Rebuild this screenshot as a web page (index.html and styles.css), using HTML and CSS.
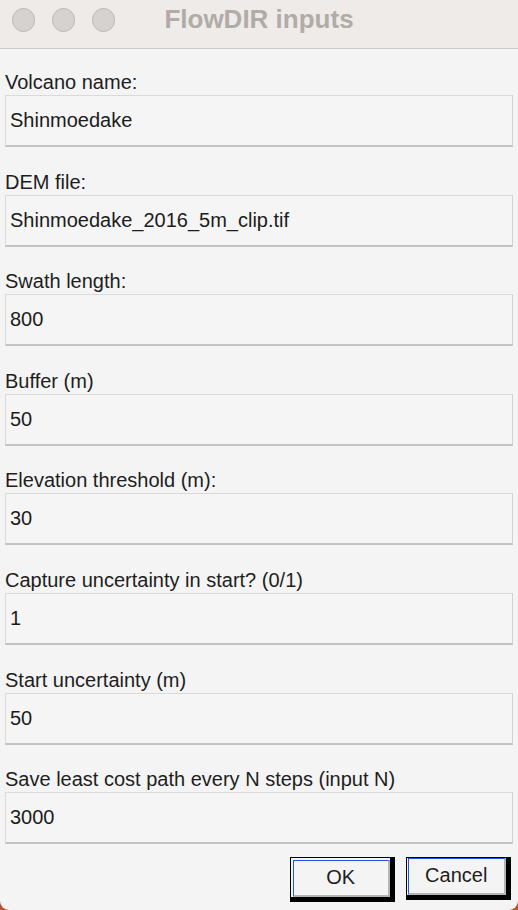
FILE: index.html
```html
<!DOCTYPE html>
<html lang="en">
<head>
<meta charset="utf-8">
<title>FlowDIR inputs</title>
<link rel="stylesheet" href="styles.css">
</head>
<body>
<div class="window">
  <div class="titlebar">
    <div class="lights">
      <span class="light"></span>
      <span class="light"></span>
      <span class="light"></span>
    </div>
    <div class="title">FlowDIR inputs</div>
  </div>
  <div class="content">
    <div class="group">
      <div class="label">Volcano name:</div>
      <div class="field">Shinmoedake</div>
    </div>
    <div class="group">
      <div class="label">DEM file:</div>
      <div class="field">Shinmoedake_2016_5m_clip.tif</div>
    </div>
    <div class="group">
      <div class="label">Swath length:</div>
      <div class="field">800</div>
    </div>
    <div class="group">
      <div class="label">Buffer (m)</div>
      <div class="field">50</div>
    </div>
    <div class="group">
      <div class="label">Elevation threshold (m):</div>
      <div class="field">30</div>
    </div>
    <div class="group">
      <div class="label">Capture uncertainty in start? (0/1)</div>
      <div class="field">1</div>
    </div>
    <div class="group">
      <div class="label">Start uncertainty (m)</div>
      <div class="field">50</div>
    </div>
    <div class="group">
      <div class="label">Save least cost path every N steps (input N)</div>
      <div class="field">3000</div>
    </div>
    <div class="buttons">
      <div class="btn btn-ok"><div class="btn-face">OK</div></div>
      <div class="btn btn-cancel"><div class="btn-face">Cancel</div></div>
    </div>
  </div>
</div>
</body>
</html>
```

FILE: styles.css
```css
html {
  background: #b9532b;
}
body {
  margin: 0;
  font-family: "Liberation Sans", Arial, Helvetica, sans-serif;
  color: #1e1e1e;
}
.window {
  width: 518px;
  height: 910px;
  background: #f4f4f4;
  border-bottom-left-radius: 9px;
  border-bottom-right-radius: 9px;
  overflow: hidden;
  box-sizing: border-box;
}
.titlebar {
  height: 49px;
  box-sizing: border-box;
  background: #efebe8;
  border-bottom: 1px solid #cfcbc8;
  display: grid;
  align-items: start;
}
.lights {
  grid-area: 1 / 1;
  justify-self: start;
  display: flex;
  gap: 16.5px;
  padding: 8.3px 0 0 12px;
}
.light {
  width: 23.4px;
  height: 23.4px;
  box-sizing: border-box;
  border-radius: 50%;
  background: #d6d2cf;
  border: 1px solid #bbb6b2;
}
.title {
  grid-area: 1 / 1;
  justify-self: center;
  font-size: 26px;
  font-weight: bold;
  line-height: 39px;
  color: #b1aca8;
}
.content {
  padding: 22px 5px 0 5px;
  display: flex;
  flex-direction: column;
}
.group {
  display: flex;
  flex-direction: column;
}
.group + .group {
  margin-top: 23.6px;
}
.label {
  font-size: 20px;
  line-height: 22px;
  height: 22px;
  margin-bottom: 2px;
  white-space: nowrap;
}
.field {
  height: 52px;
  box-sizing: border-box;
  width: 508px;
  background: #f5f5f5;
  border-top: 1px solid #dadada;
  border-left: 1px solid #dadada;
  border-right: 1px solid #d2d2d2;
  border-bottom: 2px solid #c3c3c3;
  font-size: 20px;
  line-height: 49px;
  padding-left: 4px;
  color: #1c1c1c;
  white-space: nowrap;
}
.buttons {
  display: flex;
  justify-content: flex-end;
  align-items: flex-start;
  gap: 11px;
  margin-top: 12.5px;
  padding-right: 2px;
}
.btn {
  width: 105px;
  box-sizing: border-box;
  border-top: 1px solid #000;
  border-left: 1px solid #000;
  border-right: 5px solid #000;
  border-bottom: 5px solid #000;
  background: #f4f4f4;
  display: flex;
}
.btn-ok {
  height: 45px;
  padding: 2px 0 0 1.5px;
}
.btn-cancel {
  height: 43px;
  padding: 0.5px 0 0 0.5px;
}
.btn-face {
  flex: 1;
  box-sizing: border-box;
  border-top: 1.5px solid #1c55de;
  border-left: 1.5px solid #1c55de;
  border-right: 2px solid #b4b4b4;
  border-bottom: 2px solid #b4b4b4;
  background: #f4f4f4;
  display: flex;
  align-items: center;
  justify-content: center;
  font-size: 20px;
  color: #1e1e1e;
}
```
